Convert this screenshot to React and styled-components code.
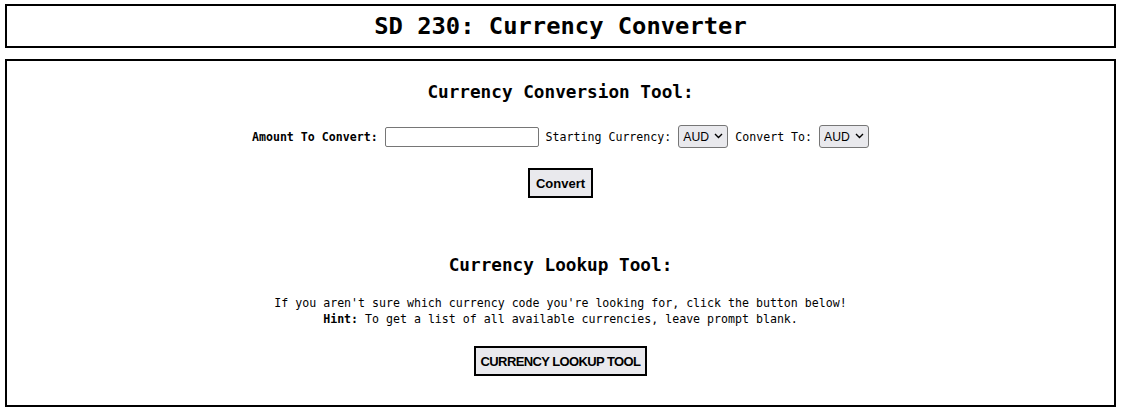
import React from "react";
import styled, { createGlobalStyle } from "styled-components";

const GlobalStyle = createGlobalStyle`
  body {
    margin: 0;
    padding: 4px 6px 0 5px;
    background: #fff;
    color: #000;
    font-family: "DejaVu Sans Mono", "Liberation Mono", monospace;
  }
`;

const Header = styled.header`
  border: 2px solid #000;
  height: 40px;
  display: flex;
  align-items: center;
  justify-content: center;
`;

const Title = styled.h1`
  margin: 0;
  font-size: 23.8px;
  font-weight: 700;
  line-height: 28px;
`;

const Main = styled.main`
  margin-top: 11px;
  border: 2px solid #000;
  height: 344px;
  box-sizing: content-box;
  display: flex;
  flex-direction: column;
  align-items: center;
`;

const Section = styled.section`
  display: flex;
  flex-direction: column;
  align-items: center;
  margin-top: ${(p) => p.top}px;
`;

const SectionTitle = styled.h2`
  margin: 0;
  font-size: 17.7px;
  font-weight: 700;
  line-height: 22px;
`;

const Row = styled.div`
  display: flex;
  align-items: center;
  gap: 7px;
  margin-top: 22px;
  height: 23px;
  font-size: 11.6px;
`;

const Label = styled.label`
  font-weight: ${(p) => (p.bold ? 700 : 400)};
`;

const Input = styled.input`
  box-sizing: border-box;
  width: 154px;
  height: 20px;
  border: 1px solid #767676;
  border-radius: 2px;
  padding: 1px 3px;
  margin: 0;
`;

const SelectWrap = styled.span`
  position: relative;
  display: inline-flex;
`;

const Select = styled.select`
  box-sizing: border-box;
  appearance: none;
  width: 50px;
  height: 23px;
  margin: 0;
  padding: 0 0 0 4px;
  font-family: "Liberation Sans", Arial, sans-serif;
  font-size: 12.2px;
  color: #000;
  background: #e9e9ed;
  border: 1px solid #767676;
  border-radius: 3px;
`;

const Chevron = styled.svg`
  position: absolute;
  right: 5px;
  top: 8px;
  width: 9px;
  height: 6px;
  pointer-events: none;
`;

const Button = styled.button`
  box-sizing: border-box;
  height: 30px;
  margin-top: ${(p) => p.top}px;
  padding: 0 ${(p) => p.pad}px;
  background: #e9e9ed;
  border: 2px solid #000;
  border-radius: 0;
  color: #000;
  font-family: "Liberation Sans", Arial, sans-serif;
  font-weight: 700;
  font-size: 13px;
  letter-spacing: ${(p) => p.spacing || 0}px;
`;

const Text = styled.p`
  margin: 19px 0 0;
  font-size: 11.6px;
  line-height: 16px;
  text-align: center;
`;

const CurrencySelect = () => (
  <SelectWrap>
    <Select defaultValue="AUD">
      <option>AUD</option>
    </Select>
    <Chevron viewBox="0 0 9 6">
      <path d="M1 1 L4.5 4.5 L8 1" fill="none" stroke="#000" strokeWidth="1.4" />
    </Chevron>
  </SelectWrap>
);

export default function App() {
  return (
    <>
      <GlobalStyle />
      <Header>
        <Title>SD 230: Currency Converter</Title>
      </Header>
      <Main>
        <Section top={20}>
          <SectionTitle>Currency Conversion Tool:</SectionTitle>
          <Row>
            <Label bold>Amount To Convert:</Label>
            <Input type="text" />
            <Label>Starting Currency:</Label>
            <CurrencySelect />
            <Label>Convert To:</Label>
            <CurrencySelect />
          </Row>
          <Button top={20} pad={6}>Convert</Button>
        </Section>
        <Section top={56}>
          <SectionTitle>Currency Lookup Tool:</SectionTitle>
          <Text>
            If you aren't sure which currency code you're looking for, click the button below!
            <br />
            <b>Hint:</b> To get a list of all available currencies, leave prompt blank.
          </Text>
          <Button top={19} pad={5} spacing={-0.6}>
            CURRENCY LOOKUP TOOL
          </Button>
        </Section>
      </Main>
    </>
  );
}
